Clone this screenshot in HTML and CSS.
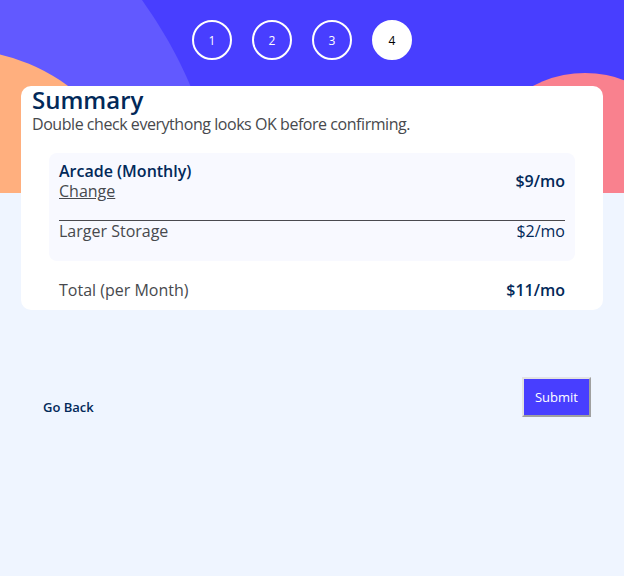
FILE: index.html
```html
<!DOCTYPE html>
<html lang="en">
<head>
<meta charset="utf-8">
<title>Summary</title>
<link rel="stylesheet" href="styles.css">
</head>
<body>
<div class="page">
  <header class="header">
    <svg class="header-bg" viewBox="0 0 624 193" preserveAspectRatio="none" aria-hidden="true">
      <rect width="624" height="193" fill="#483EFF"/>
      <path d="M0 0H142C170 40 185 70 200 110L200 193H0Z" fill="#6259FF"/>
      <circle cx="-40" cy="230" r="180" fill="#FFAF7E"/>
      <circle cx="585" cy="183" r="110" fill="#F9818E"/>
    </svg>
    <ol class="steps">
      <li class="step">1</li>
      <li class="step">2</li>
      <li class="step">3</li>
      <li class="step active">4</li>
    </ol>
  </header>
  <main class="card">
    <h1 class="title">Summary</h1>
    <p class="subtitle">Double check everythong looks OK before confirming.</p>
    <div class="summary">
      <div class="plan-row">
        <div class="plan-info">
          <div class="plan-name">Arcade (Monthly)</div>
          <a class="change" href="#">Change</a>
        </div>
        <div class="plan-price">$9/mo</div>
      </div>
      <hr class="divider">
      <div class="addon-row">
        <span class="addon-name">Larger Storage</span>
        <span class="addon-price">$2/mo</span>
      </div>
    </div>
    <div class="total-row">
      <span class="total-label">Total (per Month)</span>
      <span class="total-price">$11/mo</span>
    </div>
  </main>
  <footer class="actions">
    <a class="back" href="#">Go Back</a>
    <button class="submit" type="button">Submit</button>
  </footer>
</div>
</body>
</html>
```
FILE: styles.css
```css
* { box-sizing: border-box; }
html, body { margin: 0; padding: 0; }
body {
  background: #EFF5FF;
  font-family: "Open Sans", "Noto Sans", sans-serif;
  color: #022959;
}
.page { width: 624px; min-height: 576px; }
.header {
  position: relative;
  height: 193px;
  padding-top: 20px;
}
.header-bg {
  position: absolute;
  left: 0; top: 0;
  width: 100%; height: 100%;
  display: block;
}
.steps {
  position: relative;
  list-style: none;
  margin: 0; padding: 0 20px 0 0;
  display: flex;
  justify-content: center;
  gap: 20px;
}
.step {
  width: 40px; height: 40px;
  border: 2px solid #fff;
  border-radius: 50%;
  color: #fff;
  font-size: 12px;
  display: flex;
  align-items: center;
  justify-content: center;
}
.step.active { background: #fff; color: #000; }
.card {
  position: relative;
  margin: -107px 21px 0;
  background: #fff;
  border-radius: 10px;
  padding: 0 11px 10px;
}
.title {
  margin: 0;
  font-size: 24px;
  font-weight: 600;
  line-height: 28px;
  color: #022959;
}
.subtitle {
  margin: 0;
  font-size: 16px;
  line-height: 20px;
  color: #47494d;
  letter-spacing: -0.45px;
}
.summary {
  margin: 19px 17px 0;
  background: #F8F9FF;
  border-radius: 8px;
  padding: 8px 10px 20px;
}
.plan-row {
  display: flex;
  align-items: center;
  justify-content: space-between;
}
.plan-info { display: flex; flex-direction: column; }
.plan-name, .plan-price, .total-price {
  font-size: 16px;
  font-weight: 600;
  line-height: 20px;
  color: #022959;
}
.change {
  font-size: 16px;
  line-height: 20px;
  color: #47494d;
  text-decoration: underline;
}
.divider {
  margin: 19px 0 0;
  border: 0;
  border-top: 1px solid #4a4a4f;
  height: 0;
}
.addon-row, .total-row {
  display: flex;
  justify-content: space-between;
  font-size: 16px;
  line-height: 20px;
}
.addon-name, .total-label { color: #47494d; }
.addon-price { color: #022959; }
.total-row { margin: 19px 27px 0; }
.actions {
  display: flex;
  justify-content: space-between;
  align-items: center;
  padding: 67px 33px 0 43px;
}
.back {
  font-size: 13px;
  font-weight: 600;
  color: #022959;
  text-decoration: none;
  margin-top: 19px;
}
.submit {
  background: #483EFF;
  color: #fff;
  font-family: "Open Sans", "Noto Sans", sans-serif;
  font-size: 13px;
  height: 40px;
  padding: 0 11px;
  border: 2px solid;
  border-color: #e3e3e3 #a0a0a0 #a0a0a0 #e3e3e3;
}
```
